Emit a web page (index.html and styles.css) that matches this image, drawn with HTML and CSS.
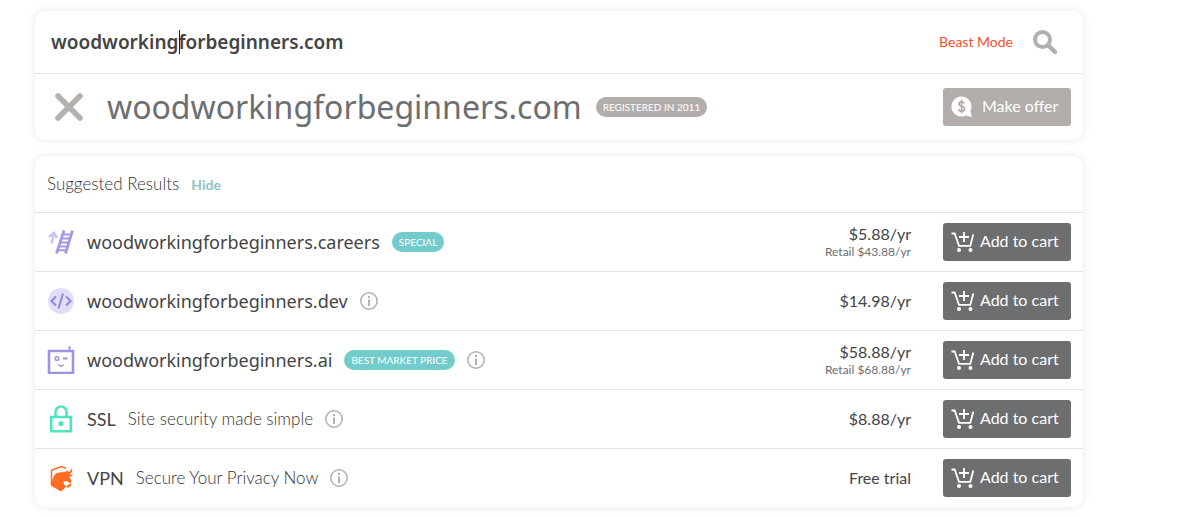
FILE: index.html
```html
<!DOCTYPE html>
<html lang="en">
<head>
  <meta charset="UTF-8">
  <meta name="viewport" content="width=device-width, initial-scale=1">
  <title>Domain search</title>
  <link rel="stylesheet" href="styles.css">
</head>
<body>
  <!-- Shared icons -->
  <svg class="sprite" aria-hidden="true">
    <symbol id="icon-cart" viewBox="0 0 24 20">
      <path d="M.500 1.500h3.200l4.300 12.300h11.300l3-11.300" fill="none" stroke="currentColor" stroke-width="1.800"/>
      <path d="M13 0v10M8 5h10" fill="none" stroke="currentColor" stroke-width="1.800"/>
      <circle cx="8" cy="18" r="2" fill="currentColor"/>
      <circle cx="19.500" cy="18" r="2" fill="currentColor"/>
    </symbol>
    <symbol id="icon-info" viewBox="0 0 18 18">
      <circle cx="9" cy="9" r="8.200" fill="none" stroke="currentColor" stroke-width="1.500"/>
      <path d="M8 4h2v2H8zM8 7.500h2V14H8z" fill="currentColor"/>
    </symbol>
  </svg>

  <main class="page">
    <section class="card">
      <form class="search">
        <div class="search-field">
          <input class="search-input" type="text" aria-label="Domain name" value="woodworkingforbeginners.com">
          <span class="caret"></span>
        </div>
        <a class="beast" href="#">Beast Mode</a>
        <button class="search-btn" type="button" aria-label="Search">
          <svg width="24" height="24" viewBox="0 0 24 24" fill="none" stroke="currentColor">
            <circle cx="9.500" cy="9.500" r="7.500" stroke-width="4"/>
            <path d="M15 15l7 7" stroke-width="4.400" stroke-linecap="round"/>
          </svg>
        </button>
      </form>
      <div class="main-result">
        <svg class="cross" width="28" height="28" viewBox="0 0 28 28">
          <path d="M3 3l22 22M25 3L3 25" fill="none" stroke="currentColor" stroke-width="5.600" stroke-linecap="round"/>
        </svg>
        <h1 class="main-name">woodworkingforbeginners.com</h1>
        <span class="tag tag-grey">REGISTERED IN 2011</span>
        <button class="btn btn-offer" type="button">
          <svg width="22" height="22" viewBox="0 0 22 22">
            <path d="M10.500 .5a10 10 0 0 1 8.800 14.600L21 21l-6.200-1.500A10 10 0 1 1 10.500.5z" fill="#fff"/>
            <path d="M13.300 7.500c-.4-1.100-1.400-1.700-2.700-1.700-1.600 0-2.700.8-2.700 2.200 0 3.100 5.600 1.600 5.600 4.900 0 1.400-1.200 2.300-2.900 2.300-1.500 0-2.700-.7-3-2M10.600 3.800v13.400" fill="none" stroke="#b3aeac" stroke-width="1.700"/>
          </svg>
          <span class="btn-text">Make offer</span>
        </button>
      </div>
    </section>

    <section class="card">
      <header class="card-head">
        <h2 class="card-title">Suggested Results</h2>
        <a class="hide" href="#">Hide</a>
      </header>
      <ul class="results">
        <li class="row">
          <svg class="row-icon" viewBox="0 0 28 28" fill="none" stroke="#a09be4">
            <path d="M9.500 25.500L17 2.500M18.500 25.500L25.500 2.500" stroke-width="2.800"/>
            <path d="M15.500 6.500h8M14.500 10.500h8M13 14.500h8M11.500 18.500h8M10.500 22.300h8" stroke-width="2"/>
            <path d="M4.500 15.500L7 5.500M2 9l5-4 3 5" stroke="#c8c5f1" stroke-width="2.600"/>
          </svg>
          <span class="name">woodworkingforbeginners.careers</span>
          <span class="tag">SPECIAL</span>
          <div class="price">$5.88/yr<small class="retail">Retail $43.88/yr</small></div>
          <button class="btn" type="button"><svg class="cart"><use href="#icon-cart"/></svg><span class="btn-text">Add to cart</span></button>
        </li>
        <li class="row">
          <svg class="row-icon" viewBox="0 0 28 28" fill="none" stroke="#928de0">
            <circle cx="14" cy="14" r="13" fill="#e1dff7" stroke="none"/>
            <path d="M9 9.500L4.500 14l4.500 4.500M19 9.500l4.500 4.500-4.500 4.500M16 6.500l-4.500 15" stroke-width="2.200"/>
          </svg>
          <span class="name">woodworkingforbeginners.dev</span>
          <button class="info" type="button" aria-label="More info"><svg><use href="#icon-info"/></svg></button>
          <div class="price">$14.98/yr</div>
          <button class="btn" type="button"><svg class="cart"><use href="#icon-cart"/></svg><span class="btn-text">Add to cart</span></button>
        </li>
        <li class="row">
          <svg class="row-icon" viewBox="0 0 28 28" fill="none" stroke="#9995e3">
            <path d="M2 5h24v22H2z" stroke-width="2.600"/>
            <path d="M22.500 5V1" stroke-width="1.400"/>
            <circle cx="22.500" cy="1.500" r="1.300" fill="#9995e3" stroke="none"/>
            <circle cx="10" cy="12.500" r="1.800" stroke-width="1.500"/>
            <path d="M16 12.500h4.500" stroke-width="2"/>
            <path d="M11.500 18.500c.8 2.200 4.200 2.200 5 0" stroke-width="1.500"/>
          </svg>
          <span class="name">woodworkingforbeginners.ai</span>
          <span class="tag">BEST MARKET PRICE</span>
          <button class="info" type="button" aria-label="More info"><svg><use href="#icon-info"/></svg></button>
          <div class="price">$58.88/yr<small class="retail">Retail $68.88/yr</small></div>
          <button class="btn" type="button"><svg class="cart"><use href="#icon-cart"/></svg><span class="btn-text">Add to cart</span></button>
        </li>
        <li class="row">
          <svg class="row-icon" viewBox="0 0 28 28" fill="none" stroke="#50e3c2">
            <path d="M4.200 12h19.600v14.200H4.200z" stroke-width="2.600"/>
            <path d="M8.500 12V7a5.500 5.500 0 0 1 11 0v5" stroke-width="2.600"/>
            <circle cx="14" cy="18.500" r="2.600" fill="#50e3c2" stroke="none"/>
          </svg>
          <span class="name name-short">SSL</span>
          <span class="desc">Site security made simple</span>
          <button class="info" type="button" aria-label="More info"><svg><use href="#icon-info"/></svg></button>
          <div class="price">$8.88/yr</div>
          <button class="btn" type="button"><svg class="cart"><use href="#icon-cart"/></svg><span class="btn-text">Add to cart</span></button>
        </li>
        <li class="row">
          <svg class="row-icon" viewBox="0 0 28 28" fill="#ff6c22">
            <path d="M4.500 19V6.200L14 2.500l5 1.800" fill="none" stroke="#ff6c22" stroke-width="1.500"/>
            <path d="M3.700 21.500V19c2.800-2.500 1.700-6 4.500-8.700C10.500 8 14 8.500 16.500 8c2.500 0 3.700-1 4.500-2.700l-.2 2.700c2.200-.5 3.700-2 4.200-4.500 1 3.500-.5 6-3 7h4c-1 1.500-2 2.200-3.700 2.200l2.400 4.600-1.700 1.900-2.500-1.700-4-.3c-.5 2.300 1.500 4.300 3 5.300L14 27.500z"/>
            <path d="M24 19v2.700l-3 2.300-1.800-1.500z"/>
          </svg>
          <span class="name name-short">VPN</span>
          <span class="desc">Secure Your Privacy Now</span>
          <button class="info" type="button" aria-label="More info"><svg><use href="#icon-info"/></svg></button>
          <div class="price">Free trial</div>
          <button class="btn" type="button"><svg class="cart"><use href="#icon-cart"/></svg><span class="btn-text">Add to cart</span></button>
        </li>
      </ul>
    </section>
  </main>
</body>
</html>
```
FILE: styles.css
```css
* {
  box-sizing: border-box;
}
body {
  margin: 0;
  background: #fff;
  color: #444;
  font-family: Lato, "Noto Sans", sans-serif;
  font-size: 16px;
  line-height: 20px;
}
button, input {
  font: inherit;
  color: inherit;
}
button {
  padding: 0;
  border: 0;
  background: none;
  cursor: pointer;
}
a {
  text-decoration: none;
}
svg {
  display: block;
  flex: none;
}
.sprite {
  position: absolute;
  width: 0;
  height: 0;
}
.page {
  display: flex;
  flex-direction: column;
  gap: 16px;
  padding: 11px 102px 10px 35px;
}
.card {
  background: #fff;
  border-radius: 10px;
  box-shadow: 0 0 8px rgba(0, 0, 0, 0.1);
}

/* search bar */
.search {
  display: flex;
  align-items: center;
  height: 62px;
  padding: 0 26px 0 16px;
}
.search-field {
  position: relative;
  flex: 1;
}
.search-input {
  display: block;
  width: 100%;
  height: 28px;
  padding: 0;
  border: 0;
  outline: none;
  background: none;
  font-family: "Noto Sans", sans-serif;
  font-size: 19px;
  font-weight: 600;
}
.caret {
  position: absolute;
  left: 128px;
  top: 2px;
  width: 1px;
  height: 24px;
  background: #222;
}
.beast {
  color: #f5502f;
  font-size: 14px;
}
.search-btn {
  margin-left: 20px;
  color: #b0b0b0;
}
.main-result {
  display: flex;
  align-items: center;
  height: 67px;
  padding: 0 12px 0 20px;
  border-top: 1px solid #e3e3e3;
}
.cross {
  color: #b3b0ae;
}
.main-name {
  margin: 0 14px 0 24px;
  color: #6d6e70;
  font-family: "Noto Sans", sans-serif;
  font-size: 32px;
  font-weight: 400;
  line-height: 40px;
}

/* suggested results */
.card-head {
  display: flex;
  align-items: baseline;
  gap: 12px;
  height: 56px;
  padding: 18px 12px 0;
}
.card-title {
  margin: 0;
  color: #333;
  font-size: 17px;
  font-weight: 300;
}
.hide {
  color: #8fc3c6;
  font-size: 14px;
  font-weight: 700;
}
.results {
  margin: 0;
  padding: 0;
  list-style: none;
}
.row {
  display: flex;
  align-items: center;
  gap: 12px;
  height: 59px;
  padding: 0 12px;
  border-top: 1px solid #e3e3e3;
}
.row-icon {
  width: 28px;
  height: 28px;
}
.name {
  font-family: "Noto Sans", sans-serif;
  font-size: 18px;
  font-weight: 400;
}
.name-short {
  font-family: Lato, sans-serif;
}
.desc {
  color: #333;
  font-size: 17px;
  font-weight: 300;
}
.tag {
  padding: 0 7px;
  border-radius: 10px;
  background: #73cccc;
  color: #fff;
  font-size: 10px;
  font-weight: 400;
}
.tag-grey {
  background: #b3aeac;
}
.info {
  color: #b3b0ae;
}
.info svg {
  width: 18px;
  height: 18px;
}
.price {
  margin-left: auto;
  padding-right: 20px;
  text-align: right;
}
.retail {
  display: block;
  color: #6d6e70;
  font-size: 12px;
  line-height: 16px;
}
.btn {
  display: flex;
  align-items: center;
  gap: 5px;
  width: 128px;
  height: 38px;
  padding-left: 8px;
  border-radius: 3px;
  background: #6d6e70;
  color: #fff;
}
.btn-text {
  padding-bottom: 2px;
}
.btn-offer {
  gap: 9px;
  margin-left: auto;
  background: #b3aeac;
}
.cart {
  width: 24px;
  height: 20px;
}
```
